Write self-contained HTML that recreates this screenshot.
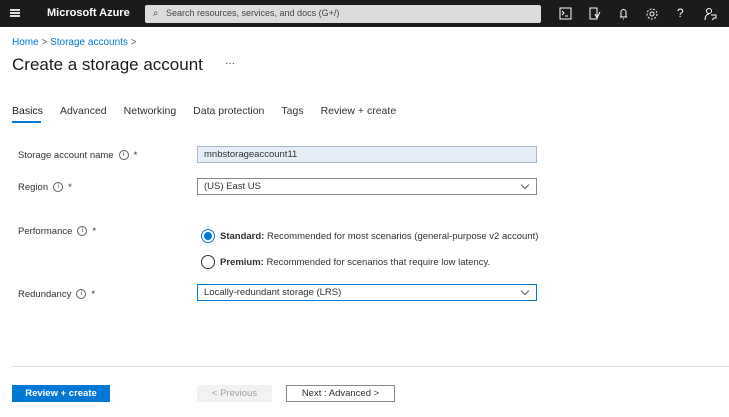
<!DOCTYPE html><html><head><style>
body{margin:0;width:729px;height:417px;overflow:hidden;background:#fff;font-family:"Liberation Sans",sans-serif;position:relative;color:#323130}
.a{position:absolute}
.top{left:0;top:0;width:729px;height:27px;background:#1b1b1b}
.lbl{font-size:9.5px;color:#323130}
.inp{border:1px solid #8a8886;height:16px;font-size:9.5px;line-height:15px;padding-left:6px;box-sizing:border-box;width:352px;left:197px}
.chev{position:absolute;right:8px;top:3px;width:5px;height:5px;border-right:1px solid #605e5c;border-bottom:1px solid #605e5c;transform:rotate(45deg)}
.i{display:inline-block;width:8px;height:8px;border:1px solid #605e5c;border-radius:50%;font-size:6px;line-height:8px;text-align:center;vertical-align:middle;margin:0 5px 0 5px}
svg.ic{position:absolute;top:7px}
</style></head><body>
<div class="a top"></div>
<div class="a" style="left:10px;top:9px;width:10px;height:2px;background:#ddd;box-shadow:0 3px 0 #ddd,0 6px 0 #ddd"></div>
<div class="a" style="left:47px;top:7px;color:#fff;font-size:11px;font-weight:bold">Microsoft Azure</div>
<div class="a" style="left:145px;top:5px;width:396px;height:18px;background:#dcdcdc;border-radius:2px"></div>
<div class="a" style="left:153px;top:8px;font-size:9.5px;color:#444">⌕</div>
<div class="a" style="left:166px;top:8px;font-size:9px;color:#444">Search resources, services, and docs (G+/)</div>
<svg class="ic" style="left:559px" width="13" height="13" viewBox="0 0 13 13" fill="none" stroke="#fff"><rect x="1" y="1" width="11" height="11"/><path d="M3 4l2 2-2 2M6 9h3"/></svg>
<svg class="ic" style="left:588px" width="13" height="13" viewBox="0 0 13 13" fill="none" stroke="#fff"><rect x="2" y="1" width="7" height="11"/><path d="M7 7l2 4 3-6"/></svg>
<svg class="ic" style="left:617px" width="13" height="13" viewBox="0 0 13 13" fill="none" stroke="#fff"><path d="M4 10V5a2.5 2.5 0 015 0v5zM3 10h7M6 12h1"/></svg>
<svg class="ic" style="left:645px" width="14" height="14" viewBox="0 0 14 14" fill="none" stroke="#fff"><circle cx="7" cy="7" r="2"/><circle cx="7" cy="7" r="5" stroke-dasharray="2 1.5"/></svg>
<div class="a" style="left:677px;top:6px;color:#fff;font-size:12px">?</div>
<svg class="ic" style="left:703px" width="14" height="14" viewBox="0 0 14 14" fill="none" stroke="#fff"><circle cx="6" cy="4" r="2.5"/><path d="M2 13c0-4 2-6 4-6M8 8h5v3h-2l-2 2"/></svg>
<div class="a" style="left:12px;top:37px;font-size:10px;color:#0078d4">Home <span style="color:#605e5c">&gt;</span> Storage accounts <span style="color:#605e5c">&gt;</span></div>
<div class="a" style="left:12px;top:55px;font-size:17px;color:#1b1b1b">Create a storage account</div>
<div class="a" style="left:225px;top:58px;font-size:10px">···</div>
<div class="a" style="left:12px;top:105px;font-size:10.5px;color:#323130">
<span style="color:#1b1b1b">Basics</span><span style="margin-left:17px">Advanced</span><span style="margin-left:17px">Networking</span><span style="margin-left:17px">Data protection</span><span style="margin-left:17px">Tags</span><span style="margin-left:17px">Review + create</span></div>
<div class="a" style="left:12px;top:121px;width:29px;height:2px;background:#0078d4"></div>
<div class="a lbl" style="left:18px;top:150px">Storage account name<span class="i">i</span>*</div>
<div class="a inp" style="left:197px;top:146px;width:340px;height:17px;background:#e6eef8;border-color:#a8b8c8">mnbstorageaccount11</div>
<div class="a lbl" style="left:18px;top:182px">Region<span class="i">i</span>*</div>
<div class="a inp" style="left:197px;top:178px;width:340px;height:17px">(US) East US<span class="chev"></span></div>
<div class="a lbl" style="left:18px;top:226px">Performance<span class="i">i</span>*</div>
<div class="a" style="left:201px;top:229px;width:14px;height:14px;border:1px solid #0078d4;border-radius:50%;box-sizing:border-box"></div>
<div class="a" style="left:204px;top:232px;width:8px;height:8px;background:#0078d4;border-radius:50%"></div>
<div class="a lbl" style="left:220px;top:231px"><b>Standard:</b> Recommended for most scenarios (general-purpose v2 account)</div>
<div class="a" style="left:201px;top:255px;width:14px;height:14px;border:1px solid #323130;border-radius:50%;box-sizing:border-box"></div>
<div class="a lbl" style="left:220px;top:257px"><b>Premium:</b> Recommended for scenarios that require low latency.</div>
<div class="a lbl" style="left:18px;top:289px">Redundancy<span class="i">i</span>*</div>
<div class="a inp" style="left:197px;top:284px;width:340px;height:17px;border-color:#0078d4">Locally-redundant storage (LRS)<span class="chev"></span></div>
<div class="a" style="left:12px;top:366px;width:717px;height:1px;background:#e1dfdd"></div>
<div class="a" style="left:12px;top:385px;width:98px;height:17px;background:#0078d4;color:#fff;font-size:9.5px;font-weight:bold;text-align:center;line-height:17px">Review + create</div>
<div class="a" style="left:197px;top:385px;width:75px;height:17px;background:#f3f2f1;color:#a19f9d;font-size:9.5px;text-align:center;line-height:17px">&lt; Previous</div>
<div class="a" style="left:286px;top:385px;width:109px;height:17px;border:1px solid #8a8886;box-sizing:border-box;font-size:9.5px;text-align:center;line-height:15px">Next : Advanced &gt;</div>
</body></html>
